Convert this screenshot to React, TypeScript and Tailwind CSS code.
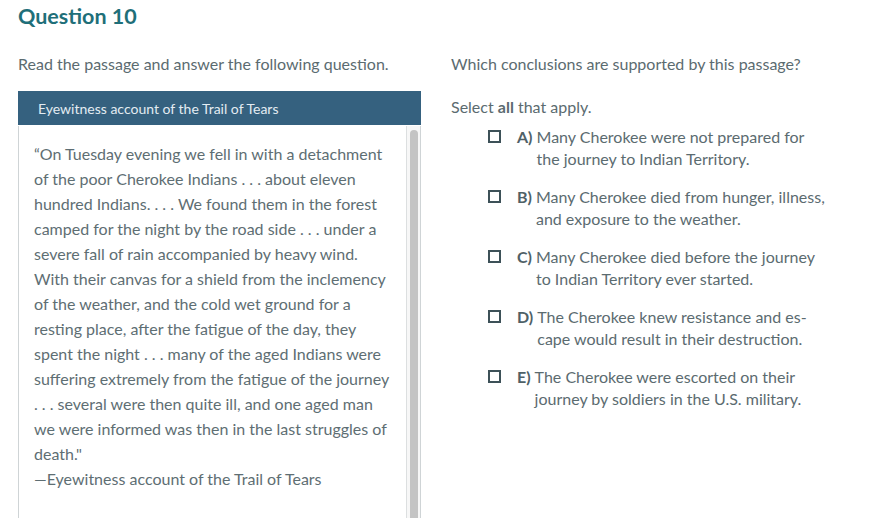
import React from "react";

const passage = [
  "“On Tuesday evening we fell in with a detachment",
  "of the poor Cherokee Indians . . . about eleven",
  "hundred Indians. . . . We found them in the forest",
  "camped for the night by the road side . . . under a",
  "severe fall of rain accompanied by heavy wind.",
  "With their canvas for a shield from the inclemency",
  "of the weather, and the cold wet ground for a",
  "resting place, after the fatigue of the day, they",
  "spent the night . . . many of the aged Indians were",
  "suffering extremely from the fatigue of the journey",
  ". . . several were then quite ill, and one aged man",
  "we were informed was then in the last struggles of",
  "death.\"",
  "—Eyewitness account of the Trail of Tears",
];

const options: { l: string; lines: string[] }[] = [
  { l: "A)", lines: ["Many Cherokee were not prepared for", "the journey to Indian Territory."] },
  { l: "B)", lines: ["Many Cherokee died from hunger, illness,", "and exposure to the weather."] },
  { l: "C)", lines: ["Many Cherokee died before the journey", "to Indian Territory ever started."] },
  { l: "D)", lines: ["The Cherokee knew resistance and es-", "cape would result in their destruction."] },
  { l: "E)", lines: ["The Cherokee were escorted on their", "journey by soldiers in the U.S. military."] },
];

export default function App() {
  return (
    <div
      className="w-[878px] h-[518px] overflow-hidden bg-white text-[#5b6b70]"
      style={{ fontFamily: "Lato, 'Open Sans', sans-serif" }}
    >
      <div className="pl-[18px] pt-[3px]">
        <h1 className="text-[21.5px] font-bold text-[#1f6f79] leading-[26px]">Question 10</h1>
      </div>
      <div className="flex pl-[18px] pt-[25px]">
        <div className="w-[403px] flex flex-col">
          <div className="text-[16px] leading-[20px] text-[#5b6b70]">Read the passage and answer the following question.</div>
          <div className="mt-[17px] h-[34px] bg-[#35617f] flex items-center pl-[20px] text-[14px] text-[#e3ecf2]">
            Eyewitness account of the Trail of Tears
          </div>
          <div className="flex h-[420px] border border-[#cfd4d6] border-t-0 mt-[1px]">
            <div className="flex-1 pl-[15px] pt-[15px] text-[16px] leading-[25px] text-[#5e6e73] whitespace-nowrap">
              {passage.map((p, i) => (
                <div key={i}>{p}</div>
              ))}
            </div>
            <div className="w-[14px] border-l border-[#dcdfe0] bg-[#f7f7f7] pt-[4px] flex justify-center">
              <div className="w-[8px] h-[400px] rounded-[4px] bg-[#c4c4c4]" />
            </div>
          </div>
        </div>
        <div className="ml-[30px] flex flex-col">
          <div className="text-[16px] leading-[20px]">Which conclusions are supported by this passage?</div>
          <div className="mt-[23px] text-[16px] leading-[20px]">
            Select <span className="font-bold">all</span> that apply.
          </div>
          <div className="pl-[37px] pt-[9px] flex flex-col gap-[16px]">
            {options.map((o) => (
              <div key={o.l} className="flex items-start text-[16px] leading-[22px]">
                <div className="w-[13px] h-[13px] border-2 border-[#3d5158] mt-[4px] shrink-0" />
                <div className="ml-[16px] font-bold text-[#4f6167]">{o.l}</div>
                <div className="ml-[4px] whitespace-nowrap">
                  {o.lines.map((t, i) => (
                    <div key={i}>{t}</div>
                  ))}
                </div>
              </div>
            ))}
          </div>
        </div>
      </div>
    </div>
  );
}
